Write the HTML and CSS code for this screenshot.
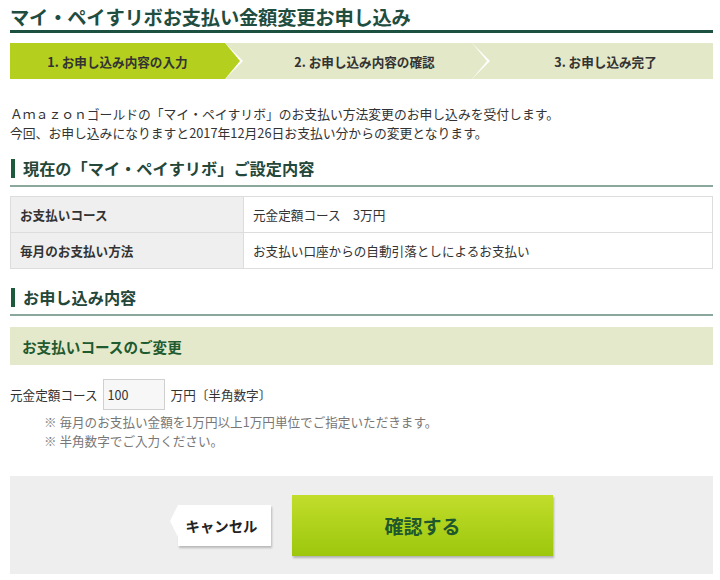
FILE: index.html
```html
<!DOCTYPE html>
<html lang="ja">
<head>
<meta charset="utf-8">
<title>マイ・ペイすリボお支払い金額変更お申し込み</title>
<link rel="stylesheet" href="styles.css">
</head>
<body>
<div class="page">
  <h1 class="title">マイ・ペイすリボお支払い金額変更お申し込み</h1>

  <ol class="steps">
    <li class="step step-current">1. お申し込み内容の入力</li>
    <li class="step step-mid">2. お申し込み内容の確認</li>
    <li class="step step-last">3. お申し込み完了</li>
  </ol>

  <div class="intro">
    <p class="intro-line">Ａｍａｚｏｎゴールドの「マイ・ペイすリボ」のお支払い方法変更のお申し込みを受付します。</p>
    <p class="intro-line">今回、お申し込みになりますと2017年12月26日お支払い分からの変更となります。</p>
  </div>

  <h2 class="section-head">現在の「マイ・ペイすリボ」ご設定内容</h2>
  <table class="info">
    <tr><th>お支払いコース</th><td>元金定額コース　3万円</td></tr>
    <tr><th>毎月のお支払い方法</th><td>お支払い口座からの自動引落としによるお支払い</td></tr>
  </table>

  <h2 class="section-head section-head-2">お申し込み内容</h2>
  <div class="subbox">お支払いコースのご変更</div>

  <div class="field">
    <span class="field-label">元金定額コース</span>
    <input class="field-input" type="text" value="100">
    <span class="field-unit">万円〔半角数字〕</span>
  </div>
  <ul class="notes">
    <li>※ 毎月のお支払い金額を1万円以上1万円単位でご指定いただきます。</li>
    <li>※ 半角数字でご入力ください。</li>
  </ul>

  <div class="actions">
    <button class="btn-cancel" type="button">キャンセル</button>
    <button class="btn-confirm" type="button">確認する</button>
  </div>
</div>
</body>
</html>
```

FILE: styles.css
```css
html, body {
  margin: 0;
  padding: 0;
  background: #ffffff;
}
body {
  font-family: "Noto Sans CJK JP", "Noto Sans", "Liberation Sans", sans-serif;
  color: #333333;
  font-size: 12.6px;
}
.page {
  width: 703px;
  margin-left: 10px;
}
.title {
  margin: 0;
  padding-top: 4px;
  font-size: 19.3px;
  line-height: 26px;
  font-weight: bold;
  color: #1f4d40;
  border-bottom: 3px solid #1c5040;
  letter-spacing: -0.2px;
}
.steps {
  list-style: none;
  margin: 10px 0 0;
  padding: 0;
  display: flex;
  height: 36px;
  background: #e2e8c8;
}
.step {
  flex: 1;
  position: relative;
  display: flex;
  align-items: center;
  justify-content: center;
  font-weight: bold;
  font-size: 12.6px;
  color: #333333;
}
.step-current {
  background: #b4cf1e;
}
.step-mid {
  padding-left: 32px;
}
.step-last {
  padding-left: 26px;
}
.step-current::before,
.step-mid::before {
  content: "";
  position: absolute;
  top: 0;
  right: -18px;
  width: 0;
  height: 0;
  border-top: 18px solid transparent;
  border-bottom: 18px solid transparent;
  border-left: 18px solid #ffffff;
  z-index: 1;
}
.step-current::after,
.step-mid::after {
  content: "";
  position: absolute;
  top: 0;
  right: -15px;
  width: 0;
  height: 0;
  border-top: 18px solid transparent;
  border-bottom: 18px solid transparent;
  border-left: 15px solid #b4cf1e;
  z-index: 2;
}
.step-mid::after {
  border-left-color: #e2e8c8;
}
.intro {
  margin-top: 26px;
  font-size: 12.8px;
  color: #333333;
}
.intro-line {
  margin: 0;
  line-height: 18.6px;
  white-space: nowrap;
}
.section-head {
  margin: 15px 0 0;
  padding-bottom: 6px;
  border-bottom: 2px solid #8aa89c;
  display: flex;
  align-items: center;
  font-size: 16.2px;
  line-height: 22px;
  font-weight: bold;
  color: #24473a;
}
.section-head::before {
  content: "";
  width: 4px;
  height: 19px;
  margin-left: 1px;
  margin-right: 8px;
  background: #1d5a3c;
}
.section-head-2 {
  margin-top: 17px;
}
.info {
  margin-top: 9px;
  width: 100%;
  border-collapse: collapse;
}
.info th,
.info td {
  height: 35px;
  padding: 0 0 0 9px;
  border: 1px solid #dddddd;
  text-align: left;
  font-size: 12.6px;
  color: #333333;
}
.info th {
  width: 223px;
  background: #efefef;
  font-weight: bold;
}
.info td {
  background: #ffffff;
}
.subbox {
  margin-top: 11px;
  height: 38px;
  display: flex;
  align-items: center;
  padding-left: 12px;
  background: #e3e9ca;
  font-size: 14.6px;
  font-weight: bold;
  color: #1f5a30;
}
.field {
  margin-top: 14px;
  display: flex;
  align-items: center;
  height: 31px;
}
.field-label {
  color: #333333;
}
.field-input {
  margin-left: 5px;
  width: 62px;
  height: 31px;
  box-sizing: border-box;
  border: 1px solid #d0d0d0;
  background: #f7f7f7;
  padding: 0 4px;
  font-family: inherit;
  font-size: 12.6px;
  color: #333333;
}
.field-unit {
  margin-left: 6px;
}
.notes {
  list-style: none;
  margin: 3px 0 0;
  padding: 0 0 0 34px;
  line-height: 18.6px;
  color: #777777;
}
.actions {
  margin-top: 26px;
  height: 98px;
  background: #eeeeee;
  display: flex;
  align-items: center;
  justify-content: center;
  gap: 21px;
}
.btn-cancel {
  position: relative;
  margin-left: 8px;
  width: 93px;
  height: 41px;
  border: none;
  background: #ffffff;
  box-shadow: 1px 2px 2px rgba(0, 0, 0, 0.22);
  font-family: inherit;
  font-size: 14.4px;
  font-weight: bold;
  color: #222222;
  padding: 0;
  text-indent: -6px;
}
.btn-cancel::before {
  content: "";
  position: absolute;
  left: -8px;
  top: 0;
  width: 0;
  height: 0;
  border-top: 16px solid transparent;
  border-bottom: 16px solid transparent;
  border-right: 8px solid #ffffff;
}
.btn-confirm {
  width: 261px;
  height: 61px;
  border: none;
  background: linear-gradient(#c2dd2c, #9cc70c);
  box-shadow: 1px 2px 2px rgba(0, 0, 0, 0.25);
  font-family: inherit;
  font-size: 19px;
  font-weight: bold;
  color: #1e582c;
  padding: 0;
}
```
